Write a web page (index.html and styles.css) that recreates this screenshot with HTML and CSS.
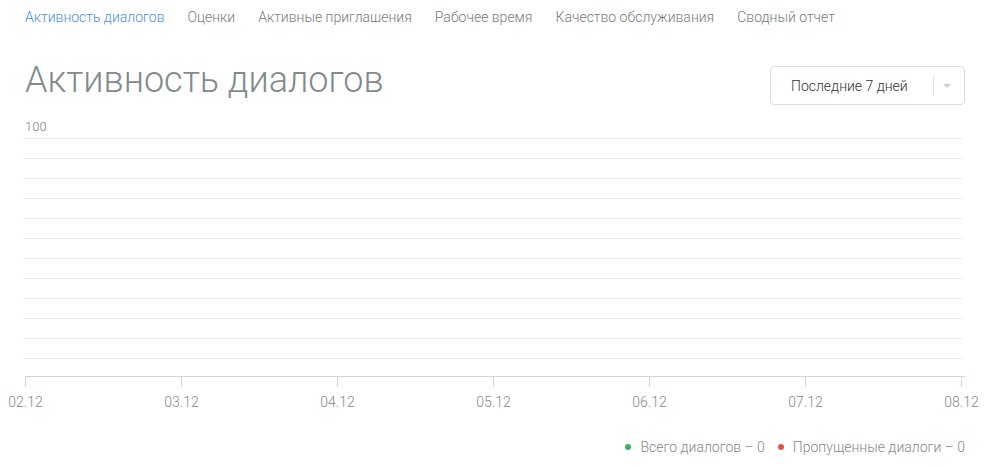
FILE: index.html
```html
<!DOCTYPE html>
<html lang="ru">
<head>
<meta charset="utf-8">
<title>Активность диалогов</title>
<link rel="stylesheet" href="styles.css">
</head>
<body>
<div class="page">
  <nav class="tabs">
    <a class="tab active">Активность диалогов</a>
    <a class="tab">Оценки</a>
    <a class="tab">Активные приглашения</a>
    <a class="tab">Рабочее время</a>
    <a class="tab">Качество обслуживания</a>
    <a class="tab">Сводный отчет</a>
  </nav>
  <div class="head">
    <h1 class="title">Активность диалогов</h1>
    <div class="select">
      <span class="select-text">Последние 7 дней</span>
      <span class="select-sep"></span>
      <span class="caret"></span>
    </div>
  </div>
  <div class="chart">
    <div class="ymax">100</div>
    <div class="grid">
      <div class="gl"></div><div class="gl"></div><div class="gl"></div><div class="gl"></div>
      <div class="gl"></div><div class="gl"></div><div class="gl"></div><div class="gl"></div>
      <div class="gl"></div><div class="gl"></div><div class="gl"></div><div class="gl"></div>
    </div>
    <div class="axis">
      <div class="ticks">
        <span class="tick"></span><span class="tick"></span><span class="tick"></span><span class="tick"></span>
        <span class="tick"></span><span class="tick"></span><span class="tick"></span>
      </div>
    </div>
    <div class="labels">
      <span class="lbl">02.12</span><span class="lbl">03.12</span><span class="lbl">04.12</span><span class="lbl">05.12</span>
      <span class="lbl">06.12</span><span class="lbl">07.12</span><span class="lbl">08.12</span>
    </div>
  </div>
  <div class="legend">
    <span class="item"><span class="dot green"></span>Всего диалогов – 0</span>
    <span class="item"><span class="dot red"></span>Пропущенные диалоги – 0</span>
  </div>
</div>
</body>
</html>
```
FILE: styles.css
```css
html, body { margin: 0; padding: 0; background: #fff; }
body { font-family: Roboto, "Noto Sans", "Liberation Sans", sans-serif; font-weight: 300; color: #777; }
.page { width: 984px; padding: 0 0 0 25px; box-sizing: border-box; }

.tabs { display: flex; gap: 23px; height: 34px; align-items: center; font-size: 14px; }
.tab { color: #7a7a7a; white-space: nowrap; cursor: pointer; font-weight: 300; }
.tab.active { color: #4a90e2; }

.head { display: flex; justify-content: space-between; align-items: flex-start; margin-top: 25px; width: 940px; }
.title { margin: 0; font-size: 36px; line-height: 42px; font-weight: 300; color: #7f8c8d; letter-spacing: 0; }
.select { margin-top: 7px; width: 195px; height: 39px; box-sizing: border-box; border: 1px solid #dcdcdc; border-radius: 4px; display: flex; align-items: center; padding-left: 20px; }
.select-text { font-size: 14px; font-weight: 300; color: #333; width: 142px; white-space: nowrap; }
.select-sep { width: 1px; height: 20px; background: #e2e2e2; }
.caret { margin-left: 9px; width: 0; height: 0; border-left: 4px solid transparent; border-right: 4px solid transparent; border-top: 4px solid #cfcfcf; }

.chart { margin-top: 14px; }
.ymax { font-size: 13px; line-height: 16px; color: #808080; height: 19px; }
.grid { margin-left: -2px; width: 940px; }
.gl { height: 19px; border-top: 1px solid #ececec; }
.axis { margin-top: -2px; width: 940px; border-top: 1px solid #ccd6da; }
.ticks { width: 937px; display: flex; justify-content: space-between; }
.tick { width: 1px; height: 10px; background: #ccd6da; }
.labels { width: 937px; display: flex; justify-content: space-between; margin-top: 5px; }
.lbl { width: 1px; display: flex; justify-content: center; white-space: nowrap; font-size: 14px; line-height: 20px; color: #888; }

.legend { width: 940px; display: flex; justify-content: flex-end; gap: 13px; margin-top: 25px; font-size: 14px; line-height: 20px; color: #888; }
.item { display: flex; align-items: center; white-space: nowrap; }
.dot { width: 6px; height: 6px; border-radius: 50%; margin-right: 9px; }
.dot.green { background: #3cb15b; }
.dot.red { background: #e8533f; }
```
